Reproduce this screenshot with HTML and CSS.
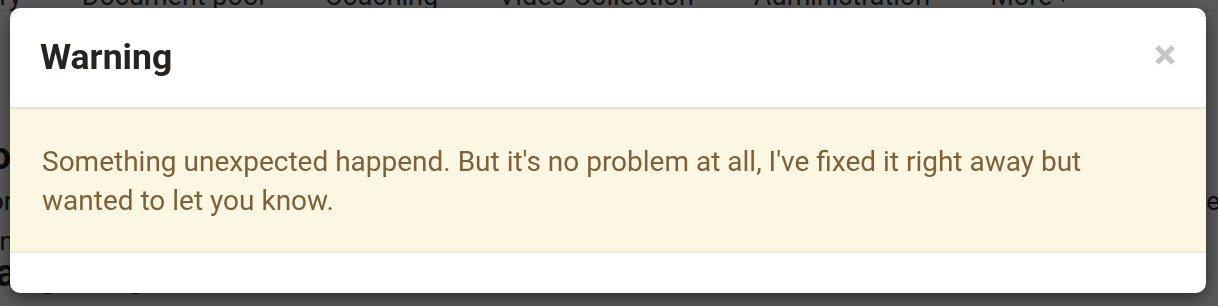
FILE: index.html
```html
<!DOCTYPE html>
<html lang="en">
<head>
<meta charset="utf-8">
<title>Warning</title>
<link rel="stylesheet" href="styles.css">
</head>
<body>
<div class="page">
  <nav class="nav">
    <span class="nav-item">Library</span>
    <span class="nav-item">Document pool</span>
    <span class="nav-item">Coaching</span>
    <span class="nav-item">Video Collection</span>
    <span class="nav-item">Administration</span>
    <span class="nav-item">More <span class="caret">▾</span></span>
  </nav>
  <div class="content">
    <h2 class="page-title">Tool</h2>
    <p class="page-text">al Lorem ipsum dolor sit amet consectetur adipiscing elit sed do eiusmod tempor incididunt ut labore et dolore magna aliqua ut enim ad minim veniam quis nostrud exercitation v</p>
    <h3 class="page-sub">r Rangurings</h3>
  </div>
</div>
<div class="backdrop"></div>
<div class="modal" role="dialog">
  <div class="modal-header">
    <h4 class="modal-title">Warning</h4>
    <button class="close" aria-label="Close">
      <svg width="22" height="22" viewBox="0 0 22 22"><path d="M3 3 L19 19 M19 3 L3 19" stroke="#c6c6c6" stroke-width="5.2" stroke-linecap="butt"/></svg>
    </button>
  </div>
  <div class="alert">
    Something unexpected happend. But it's no problem at all, I've fixed it right away but wanted to let you know.
  </div>
  <div class="modal-footer"></div>
</div>
</body>
</html>
```
FILE: styles.css
```css
html, body {
  margin: 0;
  padding: 0;
  background: #fff;
  font-family: Roboto, "Liberation Sans", sans-serif;
  overflow: hidden;
  width: 1218px;
  height: 306px;
}

.page {
  color: #222;
}

.nav {
  display: flex;
  gap: 60px;
  height: 10px;
  margin-left: -60px;
  border-bottom: 1px solid #ddd;
  overflow: visible;
  font-size: 27px;
  line-height: 1;
}

.nav-item {
  margin-top: -17px;
  white-space: nowrap;
  color: #333;
}

.caret {
  font-size: 16px;
  vertical-align: middle;
}

.content {
  margin-left: -52px;
  padding-top: 120px;
}

.page-title {
  margin: 0;
  font-size: 38px;
  line-height: 50px;
  font-weight: 700;
}

.page-text {
  margin: 0;
  font-size: 26px;
  line-height: 40px;
  width: 1290px;
}

.page-sub {
  margin: -8px 0 0 0;
  font-size: 38px;
  font-weight: 700;
  line-height: 40px;
}

.backdrop {
  position: fixed;
  inset: 0;
  background: rgba(0, 0, 0, 0.65);
}

.modal {
  position: fixed;
  top: 8px;
  left: 10px;
  width: 1196px;
  box-sizing: border-box;
  background: #fff;
  border-radius: 10px;
  box-shadow: 0 5px 16px rgba(0, 0, 0, 0.5);
  overflow: hidden;
}

.modal-header {
  display: flex;
  align-items: center;
  justify-content: space-between;
  height: 101px;
  box-sizing: border-box;
  padding: 0 30px 0 30px;
  border-bottom: 2px solid #e5e5e5;
}

.modal-title {
  margin: 0;
  font-size: 35.6px;
  font-weight: 700;
  color: #262420;
  line-height: 1.1;
}

.close {
  border: 0;
  background: none;
  padding: 0;
  display: flex;
  margin-top: -6px;
  cursor: pointer;
}

.alert {
  background: #fcf7e2;
  border-top: 1px solid #f7ecd2;
  border-bottom: 2px solid #f6e9cb;
  color: #7f6139;
  font-size: 28px;
  line-height: 39px;
  padding: 32px 64px 31px 32px;
}

.modal-footer {
  height: 40px;
}
```
